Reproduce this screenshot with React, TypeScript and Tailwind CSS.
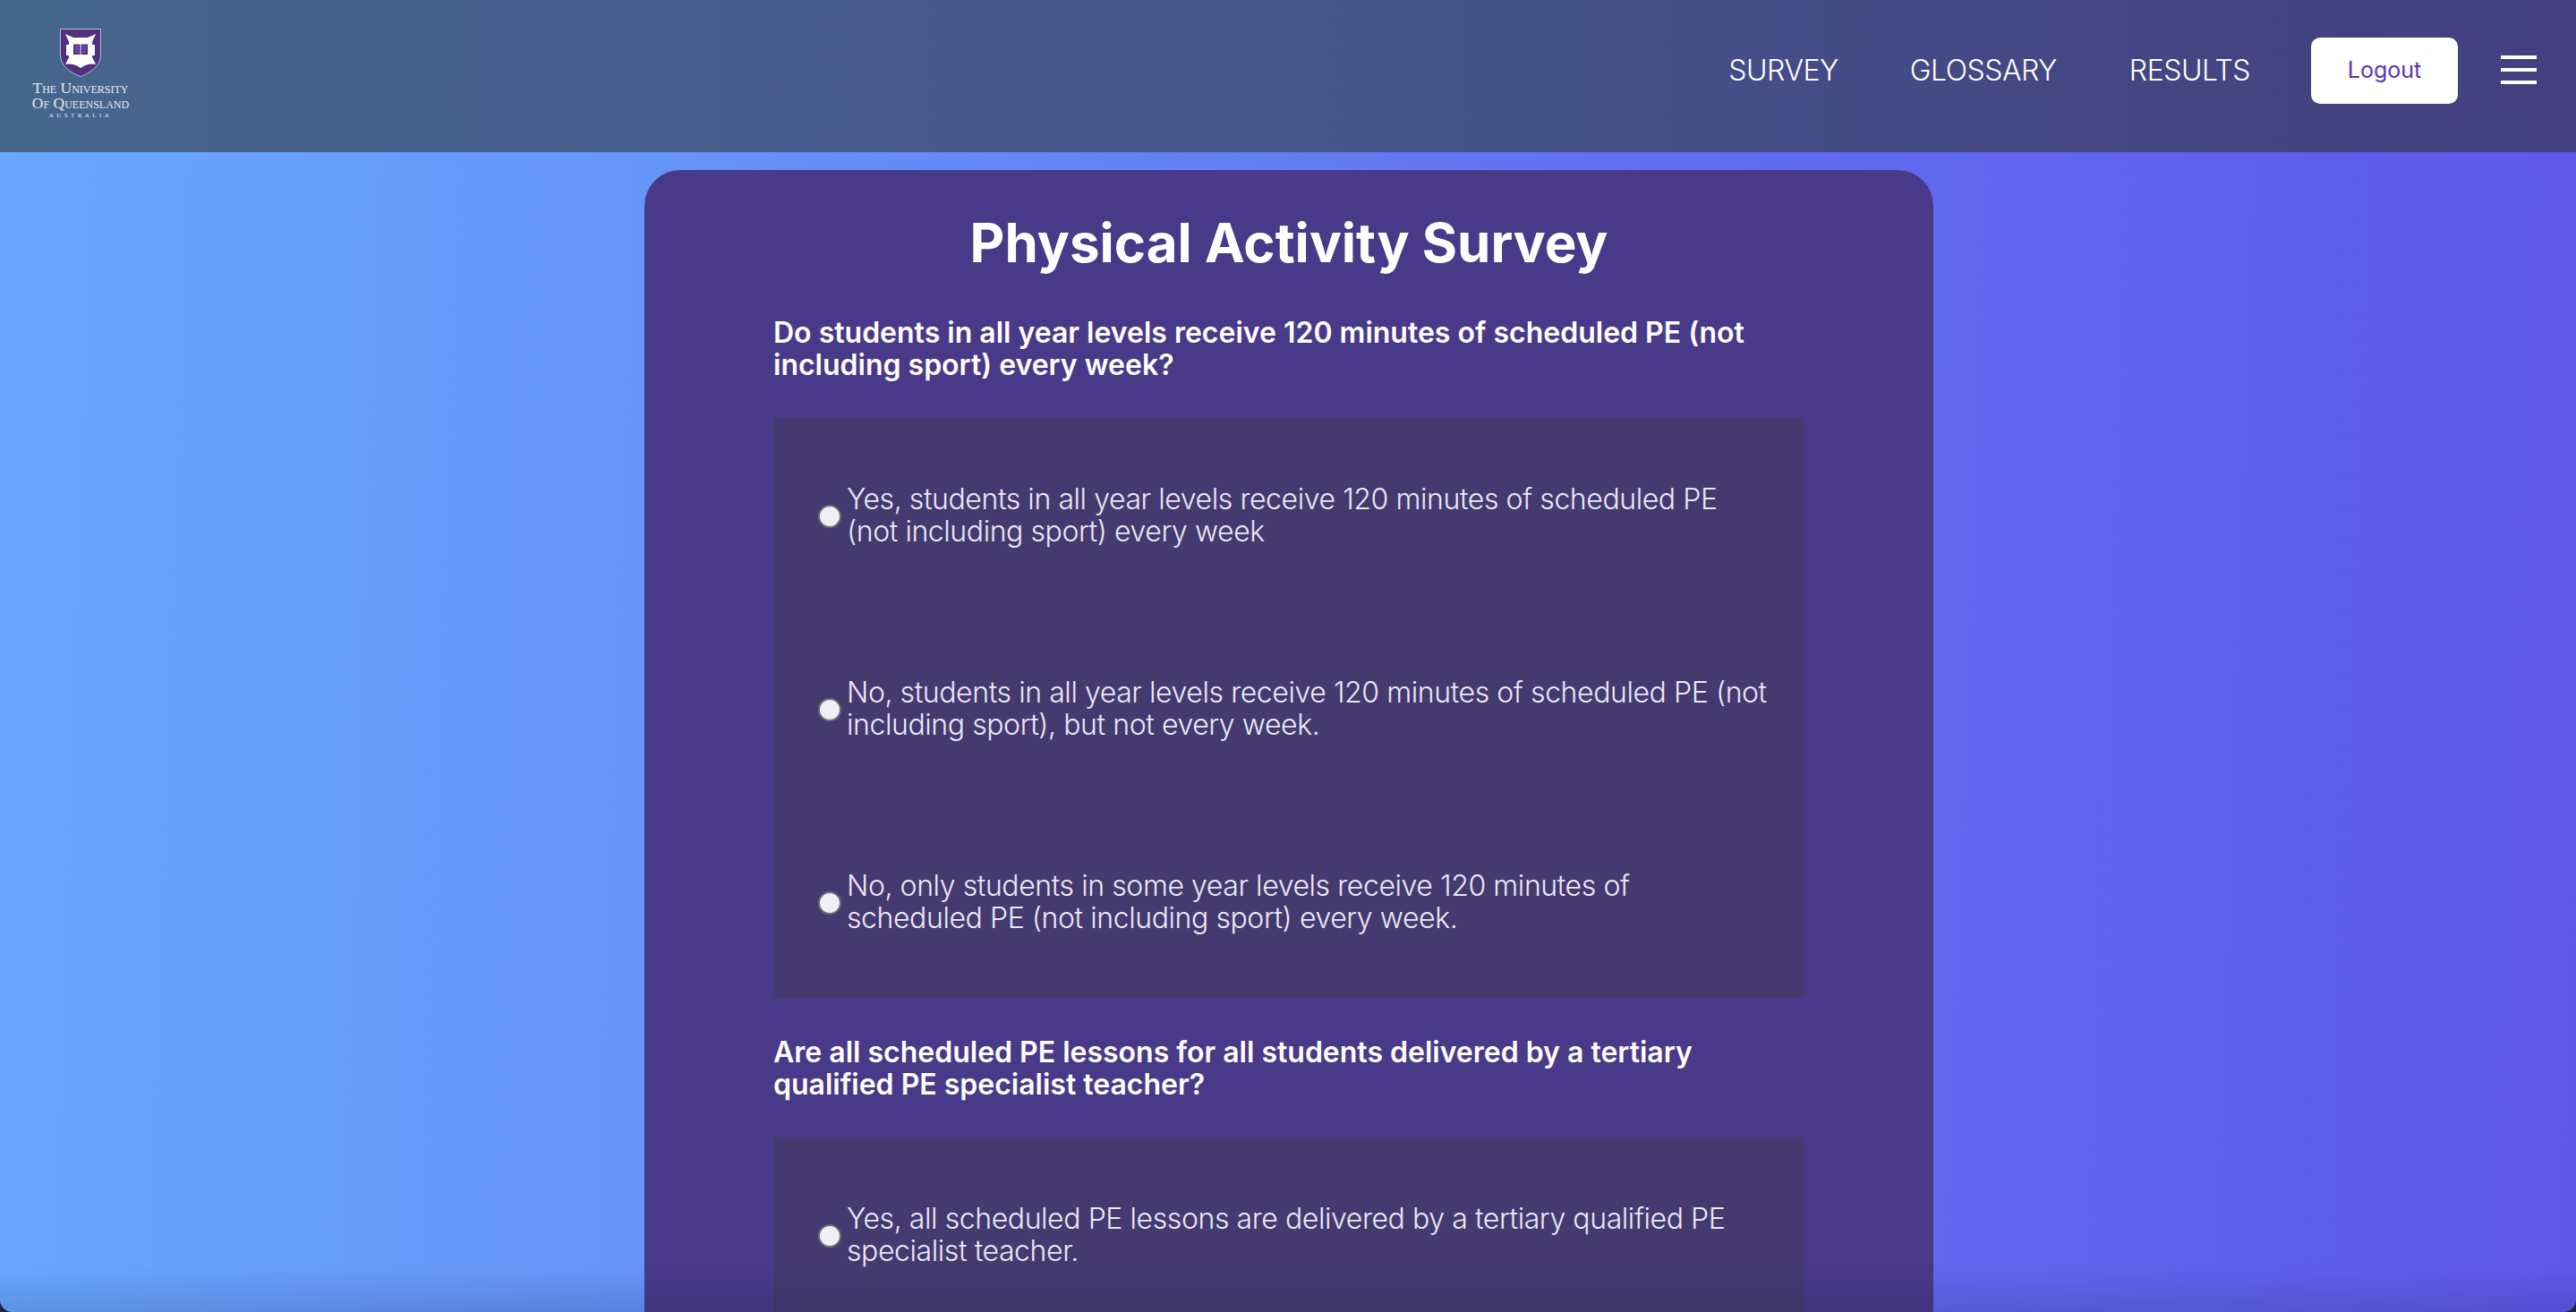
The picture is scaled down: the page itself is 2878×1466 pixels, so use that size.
const questions = [
  {
    title: 'Do students in all year levels receive 120 minutes of scheduled PE (not including sport) every week?',
    options: [
      'Yes, students in all year levels receive 120 minutes of scheduled PE (not including sport) every week',
      'No, students in all year levels receive 120 minutes of scheduled PE (not including sport), but not every week.',
      'No, only students in some year levels receive 120 minutes of scheduled PE (not including sport) every week.',
    ],
  },
  {
    title: 'Are all scheduled PE lessons for all students delivered by a tertiary qualified PE specialist teacher?',
    options: [
      'Yes, all scheduled PE lessons are delivered by a tertiary qualified PE specialist teacher.',
      'No, some scheduled PE lessons are delivered by a tertiary qualified PE specialist teacher.',
    ],
  },
]

function Crest() {
  return (
    <svg viewBox="0 0 46 54" className="w-[46px] h-[54px] block">
      <path d="M0.5 0.5H45.5V30C45.5 41 35 49 23 53.5C11 49 0.5 41 0.5 30Z" fill="#51307f" stroke="#b9bdd0" />
      {/* cross */}
      <path d="M6 6L15 10H31L40 6L36 15V32L40 40C34 39 30 39.5 23 44C16 39.5 12 39 6 40L10 32V15Z" fill="#fff" />
      <path d="M7 18H12V30H7ZM34 18H39V30H34Z" fill="#fff" />
      <path d="M10 14L14.5 18V30L10 34ZM36 14L31.5 18V30L36 34Z" fill="#fff" />
      {/* book */}
      <path d="M15 17.5H22.5V29H15ZM23.5 17.5H31V29H23.5Z" fill="#51307f" />
      <path d="M17 20H21M17 23H21M17 26H21M25 20H29M25 23H29M25 26H29" stroke="#8f7bb3" strokeWidth="1" />
    </svg>
  )
}

function Logo() {
  return (
    <div className="flex flex-col items-center w-[112px] -mt-[5px] [font-family:'Liberation_Serif',serif] text-[#e6e9f0]">
      <Crest />
      <div className="mt-[4px] text-[17.5px] leading-[17px] [font-variant:small-caps] whitespace-nowrap">The University</div>
      <div className="text-[17.5px] leading-[17px] [font-variant:small-caps] whitespace-nowrap">Of Queensland</div>
      <div className="text-[7px] leading-[10px] tracking-[3.4px] whitespace-nowrap">AUSTRALIA</div>
    </div>
  )
}

export default function App() {
  return (
    <div className="h-screen overflow-hidden bg-[#1b2440] [font-family:Inter,sans-serif]">
      <div className="relative h-full overflow-hidden rounded-b-[14px] bg-[linear-gradient(92deg,#69a8ff_0%,#6592f8_28%,#6070f0_62%,#5f57ea_100%)]">
        {/* Header */}
        <header className="h-[170px] flex items-center justify-between pl-[34px] pr-[44px] bg-[linear-gradient(90deg,#46668c_0%,#465a8d_35%,#444f88_65%,#443e80_100%)]">
          <Logo />
          <nav className="flex items-center -mt-[14px]">
            <a className="text-[32px] leading-[36px] font-light tracking-[-0.5px] text-white mt-[2px] mr-[80px]">SURVEY</a>
            <a className="text-[32px] leading-[36px] font-light tracking-[-0.5px] text-white mt-[2px] mr-[81px]">GLOSSARY</a>
            <a className="text-[32px] leading-[36px] font-light tracking-[-0.5px] text-white mt-[2px] mr-[68px]">RESULTS</a>
            <button className="w-[164px] h-[74px] rounded-[10px] bg-white text-[25px] text-[#5a35b0] mr-[48px] mt-[2px]">Logout</button>
            <div className="flex flex-col gap-[10px]">
              <span className="block w-[40px] h-[4px] bg-white" />
              <span className="block w-[40px] h-[4px] bg-white" />
              <span className="block w-[40px] h-[4px] bg-white" />
            </div>
          </nav>
        </header>

        {/* Survey card */}
        <main className="w-[1440px] ml-[720px] mt-[20px] rounded-t-[40px] bg-[#483989] px-[144px] pt-[36px] pb-[40px]">
          <h1 className="text-center text-[60px] leading-[90px] font-bold text-white">Physical Activity Survey</h1>
          <div className="mt-[38px]">
            {questions.map((q, i) => (
              <section key={i} className="mb-[43px]">
                <h2 className="text-[32px] leading-[36px] font-semibold text-white">{q.title}</h2>
                <div className="mt-[41px] bg-[#443a70] pl-[50px] pr-[38px]">
                  {q.options.map((opt, j) => (
                    <label key={j} className="flex items-center h-[216px] pt-[4px]">
                      <span className="flex-none w-[26px] h-[26px] rounded-full border-2 border-[#6f6f6f] bg-[#efeff5] mr-[6px]" />
                      <span className="mb-[3px] text-[32px] leading-[36px] font-[350] tracking-[-0.42px] text-[#ebe9f5]">{opt}</span>
                    </label>
                  ))}
                </div>
              </section>
            ))}
          </div>
        </main>

        {/* window shadow along the bottom edge */}
        <div className="absolute left-0 right-0 bottom-0 h-[50px] bg-[linear-gradient(180deg,rgba(20,30,60,0)_0%,rgba(20,30,60,0.15)_100%)]" />
      </div>
    </div>
  )
}
